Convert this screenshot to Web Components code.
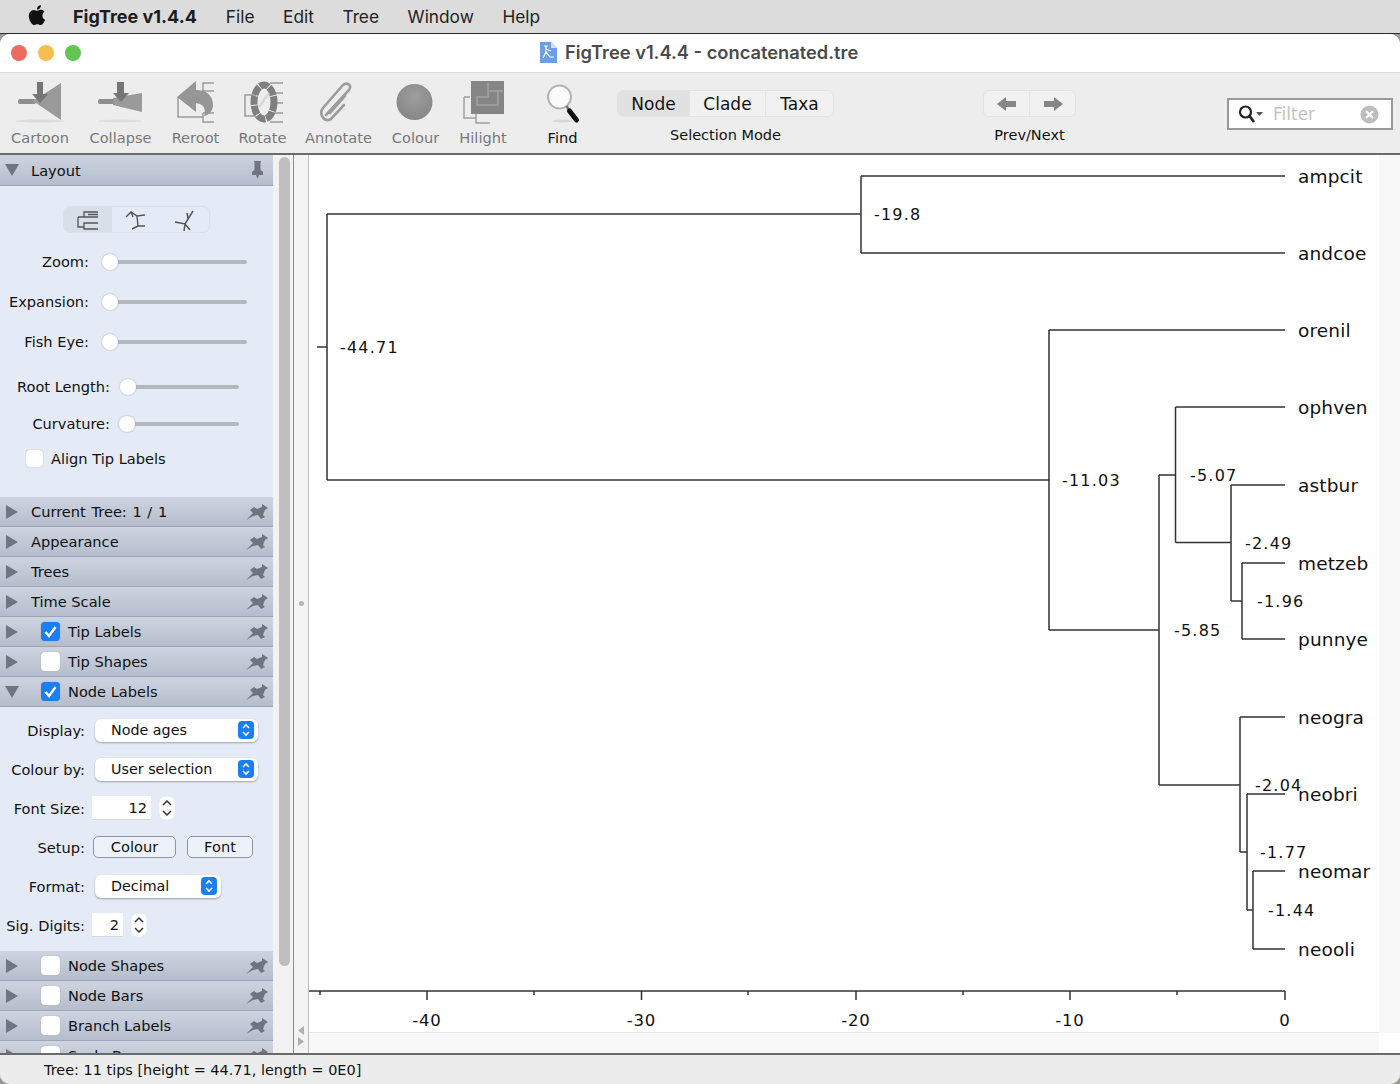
<!DOCTYPE html>
<html>
<head>
<meta charset="utf-8">
<title>FigTree</title>
<style>
  html, body { margin: 0; height: 100%; overflow: hidden; background: #9c9a94; }
  body { display: flex; flex-direction: column; font-family: "DejaVu Sans", sans-serif; color: #111; }
</style>
</head>
<body>
<fig-menubar></fig-menubar>
<fig-window>
  <fig-titlebar></fig-titlebar>
  <fig-toolbar></fig-toolbar>
  <fig-main>
    <fig-sidebar></fig-sidebar>
    <fig-tree></fig-tree>
  </fig-main>
  <fig-status>Tree: 11 tips [height = 44.71, length = 0E0]</fig-status>
</fig-window>
<script>
const css = String.raw
const html = String.raw

const PIN = html`<svg width="22" height="16" viewBox="0 0 22 16"><path fill="#6f747e" d="M0 16 L7 9 L4 6 L8 3 L11 5 L16 3 L16 0 L22 4 L19 6 L17 11 L19 13 L15 15 L12 11 L7 12 Z"/></svg>`
const PIN_DOWN = html`<svg width="22" height="18" viewBox="0 0 22 18"><path fill="#70757f" d="M8 0 H15 L14.5 2 V9 L17 11 V14 H13 L11.5 18 L10 14 H6 V11 L8.5 9 V2 Z"/></svg>`
const CHECK = html`<svg width="19" height="19" viewBox="0 0 19 19"><path d="M4.5 10 L8 14 L14.5 5" fill="none" stroke="#fff" stroke-width="2.4"/></svg>`
const UPDOWN = html`<svg width="16" height="18" viewBox="0 0 16 18"><path d="M5 7 L8 4 L11 7 M5 11 L8 14 L11 11" fill="none" stroke="#fff" stroke-width="1.6"/></svg>`

class FigMenubar extends HTMLElement {
  constructor() {
    super()
    this.attachShadow({ mode: "open" })
    this.shadowRoot.innerHTML = html`
      <style>
        :host { display: flex; align-items: center; flex: none; height: 33px; padding-bottom: 1px; box-sizing: content-box; height: 32px; background: #dcdcdc; border-bottom: 1px solid #2c2c2c; padding-left: 25px; font: 17.3px Inter, sans-serif; color: #222; }
        svg { width: 24px; height: 24px; margin-right: 24px; margin-top: -3px; }
        b { font-size: 18px; font-weight: 700; margin-right: 29px; color: #1c1c1c; }
        span { margin-right: 28.6px; }
      </style>
      <svg viewBox="0 0 24 24"><path fill="#111" d="M18.71 19.5c-.83 1.24-1.71 2.45-3.05 2.47-1.34.03-1.77-.79-3.29-.79-1.53 0-2 .77-3.27.82-1.31.05-2.3-1.32-3.14-2.53C4.25 17 2.94 12.45 4.7 9.39c.87-1.52 2.43-2.48 4.12-2.51 1.28-.02 2.5.87 3.29.87.78 0 2.26-1.07 3.81-.91.65.03 2.47.26 3.64 1.98-.09.06-2.17 1.28-2.15 3.81.03 3.02 2.65 4.03 2.68 4.04-.03.07-.42 1.44-1.38 2.83M13 3.5c.73-.83 1.94-1.46 2.94-1.5.13 1.17-.34 2.35-1.04 3.19-.69.85-1.83 1.51-2.95 1.42-.15-1.15.41-2.35 1.05-3.11z"/></svg>
      <b>FigTree v1.4.4</b><span>File</span><span>Edit</span><span>Tree</span><span>Window</span><span>Help</span>
    `
  }
}
customElements.define("fig-menubar", FigMenubar)

class FigWindow extends HTMLElement {
  constructor() {
    super()
    this.attachShadow({ mode: "open" })
    this.shadowRoot.innerHTML = html`
      <style>
        :host { display: flex; flex-direction: column; flex: 1; min-height: 0; border-radius: 10px; overflow: hidden; background: #ececec; }
      </style>
      <slot></slot>
    `
  }
}
customElements.define("fig-window", FigWindow)

class FigTitlebar extends HTMLElement {
  constructor() {
    super()
    this.attachShadow({ mode: "open" })
    this.shadowRoot.innerHTML = html`
      <style>
        :host { display: flex; align-items: center; flex: none; height: 38px; background: #fff; border-bottom: 1px solid #dcdcdc; padding-left: 11px; font: 600 18.3px Inter, sans-serif; color: #4b4b4b; }
        i { width: 16px; height: 16px; border-radius: 50%; margin-right: 11px; }
        .title { display: flex; align-items: center; margin-left: 448px; margin-top: -2px; }
        svg { margin-right: 8px; }
      </style>
      <i style="background:#ed6a5e"></i><i style="background:#f5bf4f"></i><i style="background:#61c554"></i>
      <div class="title">
        <svg width="17" height="21" viewBox="0 0 17 21"><path fill="#6b9ee6" d="M0 0 H11 L17 6 V21 H0 Z"/><path fill="#cfe0f8" d="M11 0 L17 6 H11 Z"/><path d="M4 4 H8 M6 4 V10 M6 7 L11 9 M6 10 L3 16 M6 10 L10 15 M10 15 H14" stroke="#fff" stroke-width="1.2" fill="none"/></svg>
        <span>FigTree v1.4.4 - concatenated.tre</span>
      </div>
    `
  }
}
customElements.define("fig-titlebar", FigTitlebar)

class FigTool extends HTMLElement {
  constructor() {
    super()
    this.attachShadow({ mode: "open" })
    this.shadowRoot.innerHTML = html`
      <style>
        :host { display: flex; flex-direction: column; align-items: center; width: var(--w); font-size: 14.6px; color: #787878; white-space: nowrap; }
        .icon { height: 46px; display: flex; justify-content: center; margin-bottom: 4px; }
        :host([active]) { color: #111; }
      </style>
      <div class="icon"><slot></slot></div>
      <span>${this.getAttribute("label")}</span>
    `
    this.style.setProperty("--w", this.getAttribute("width") + "px")
  }
}
customElements.define("fig-tool", FigTool)

class FigToolbar extends HTMLElement {
  constructor() {
    super()
    this.attachShadow({ mode: "open" })
    this.shadowRoot.innerHTML = html`
      <style>
        :host { display: flex; flex: none; height: 82px; box-sizing: border-box; padding: 6px 7px 0 10px; background: #ededed; border-bottom: 2px solid #6a6a6a; }
        .tools { display: flex; gap: 19px; }
        .find { margin-left: 21px; }
        .group { display: flex; flex-direction: column; align-items: center; font-size: 14.5px; color: #111; }
        .seg { display: flex; height: 27px; margin-top: 11px; margin-bottom: 10px; box-sizing: border-box; border: 1px solid #e2e2e2; border-radius: 6px; background: #f1f1f1; font-size: 17px; }
        .seg span { display: flex; align-items: center; justify-content: center; border-left: 1px solid #e4e4e4; }
        .seg span:first-child { border-left: 0; background: #e1e1e1; border-radius: 5px 0 0 5px; }
        .mode { margin-left: 37px; }
        .nav { margin-left: 151px; }
        .nav .seg span:first-child { background: none; }
        .search { display: flex; align-items: center; box-sizing: border-box; width: 166px; height: 32px; margin: 19px 0 0 152px; background: #fff; border: 2px solid #999; padding: 0 12px 0 9px; font-size: 17px; color: #c2c2c2; }
        .search span { flex: 1; margin-left: 8px; }
      </style>
      <div class="tools">
        <fig-tool label="Cartoon" width="60"><svg width="60" height="46" viewBox="10 78 60 46">
          <ellipse cx="40" cy="120" rx="25" ry="1.5" fill="#dcdcdc"/>
          <rect x="18" y="98" width="18" height="5" rx="2" fill="#8f8f8f"/><path d="M33 100 L61 82 V119 Z" fill="#9a9a9a"/>
          <path d="M37 81 H43 V93 H48 L40 102 L32 93 H37 Z" fill="#757575"/></svg></fig-tool>
        <fig-tool label="Collapse" width="63"><svg width="63" height="46" viewBox="89 78 63 46">
          <ellipse cx="120" cy="120" rx="22" ry="1.5" fill="#dcdcdc"/>
          <rect x="98" y="98" width="18" height="5" rx="2" fill="#8f8f8f"/><path d="M113 97 L142 92 V111 L113 104 Z" fill="#9a9a9a"/>
          <path d="M117 81 H124 V92 H129 L121 101 L113 92 H117 Z" fill="#757575"/></svg></fig-tool>
        <fig-tool label="Reroot" width="49"><svg width="49" height="46" viewBox="171 78 49 46">
          <path d="M203 90 V82 H214 M203 90 H214 M178 96 V116 H203 M203 112 V121 H214 M203 112 H214" fill="none" stroke="#9a9a9a" stroke-width="1.5"/>
          <path d="M177 96 L196 80 V89 C207 89 213 95 213 104 C213 110 209 114 204 115 C206 110 205 103 196 102 V111 Z" fill="#969696"/></svg></fig-tool>
        <fig-tool label="Rotate" width="47"><svg width="47" height="46" viewBox="239 78 47 46">
          <path d="M256 94 H245 V115 H256 M270 82 H283 M272 92 H283 M272 102 H283 M270 121 H283 M272 112 H283" fill="none" stroke="#9a9a9a" stroke-width="1.5"/>
          <ellipse cx="264" cy="101" rx="10" ry="17" fill="none" stroke="#7f7f7f" stroke-width="7" stroke-dasharray="9 1"/>
          <path d="M259 106 L269 92" stroke="#d8d8d8" stroke-width="2.5"/></svg></fig-tool>
        <fig-tool label="Annotate" width="67"><svg width="67" height="46" viewBox="305 78 67 46">
          <path d="M326 114 L349 89 C353 84 346 80 342 85 L323 107 C319 112 323 122 331 118 L344 104 M345 95 L330 112" fill="none" stroke="#9c9c9c" stroke-width="2.6" stroke-linecap="round"/></svg></fig-tool>
        <fig-tool label="Colour" width="49"><svg width="49" height="46" viewBox="392 78 49 46">
          <defs><radialGradient id="ball" cx="50%" cy="35%" r="65%"><stop offset="0" stop-color="#9e9e9e"/><stop offset="1" stop-color="#868686"/></radialGradient></defs>
          <circle cx="415.5" cy="101" r="18" fill="url(#ball)"/></svg></fig-tool>
        <fig-tool label="Hilight" width="48"><svg width="48" height="46" viewBox="461 78 48 46">
          <path d="M466 96 V117 H478 M472 96 H466 M478 112 V122 H492 M478 112 H492" fill="none" stroke="#a0a0a0" stroke-width="1.5"/>
          <rect x="473" y="80" width="33" height="33" fill="#858585"/><path d="M479 96 V104 H500 V90 H490 V96 Z M490 82 V90 H505" fill="none" stroke="#a3a3a3" stroke-width="1.5"/></svg></fig-tool>
        <fig-tool class="find" label="Find" active width="31"><svg width="36" height="46" viewBox="546.5 78 36 46">
          <ellipse cx="564" cy="120" rx="10" ry="1.5" fill="#d6d6d6"/>
          <circle cx="561" cy="96" r="11.5" fill="#fbfbfb" stroke="#b4b4b4" stroke-width="2"/>
          <path d="M568 105 L571 110" stroke="#777" stroke-width="2.5"/><path d="M571 110 L578 119" stroke="#111" stroke-width="5" stroke-linecap="round"/></svg></fig-tool>
      </div>
      <div class="group mode" style="margin-left:39px">
        <div class="seg"><span style="width:71px">Node</span><span style="width:75px">Clade</span><span style="width:67px">Taxa</span></div>
        <span>Selection Mode</span>
      </div>
      <div class="group nav" style="margin-left:149px">
        <div class="seg"><span style="width:45px"><svg width="20" height="16" viewBox="0 0 20 16"><path d="M0 8 L9 1 V5 H19 V11 H9 V15 Z" fill="#858585"/></svg></span><span style="width:45px"><svg width="20" height="16" viewBox="0 0 20 16"><path d="M20 8 L11 1 V5 H1 V11 H11 V15 Z" fill="#858585"/></svg></span></div>
        <span>Prev/Next</span>
      </div>
      <div class="search" style="margin-left:151px">
        <svg width="27" height="20" viewBox="0 0 27 20"><circle cx="7.5" cy="8" r="5.5" fill="none" stroke="#222" stroke-width="2.2"/><path d="M11.5 12 L16 18" stroke="#222" stroke-width="2.6"/><path d="M18 8 H25 L21.5 12 Z" fill="#555"/></svg>
        <span>Filter</span>
        <svg width="19" height="19" viewBox="0 0 19 19"><circle cx="9.5" cy="9.5" r="9" fill="#bdbdbd"/><path d="M6 6 L13 13 M13 6 L6 13" stroke="#fff" stroke-width="2.2"/></svg>
      </div>
    `
  }
}
customElements.define("fig-toolbar", FigToolbar)

class FigMain extends HTMLElement {
  constructor() {
    super()
    this.attachShadow({ mode: "open" })
    this.shadowRoot.innerHTML = html`
      <style>
        :host { display: flex; flex: 1; min-height: 0; background: #fff; }
      </style>
      <slot></slot>
    `
  }
}
customElements.define("fig-main", FigMain)

class FigSection extends HTMLElement {
  constructor() {
    super()
    this.attachShadow({ mode: "open" })
    const open = this.hasAttribute("open")
    const check = this.getAttribute("check")
    const pin = this.hasAttribute("pinned") ? PIN_DOWN : PIN
    this.shadowRoot.innerHTML = html`
      <style>
        :host { display: block; font-size: 14.6px; }
        .head { display: flex; align-items: center; height: var(--h, 30px); box-sizing: border-box; background: linear-gradient(#ced4e0, #b5bdcc); border-bottom: 1px solid #9da6b8; }
        .arrow { width: 0; height: 0; margin-left: 6px; border-style: solid; }
        .closed { border-width: 7px 0 7px 12px; border-color: transparent transparent transparent #6f7583; }
        .opened { margin-left: 5px; margin-right: -1px; border-width: 12px 7px 0 7px; border-color: #6f7583 transparent transparent transparent; }
        .name { flex: 1; margin-left: 13px; white-space: nowrap; }
        .box { width: 19px; height: 19px; margin-left: 23px; margin-right: -5px; border-radius: 4px; background: #fff; box-shadow: 0 0 1px #8b8b8b; }
        .box.on { background: #1a7ff5; }
        .pin { display: flex; margin-right: 5px; }
      </style>
      <div class="head">
        <i class="arrow ${open ? "opened" : "closed"}"></i>
        ${check === null ? "" : `<i class="box ${check === "on" ? "on" : ""}">${check === "on" ? CHECK : ""}</i>`}
        <span class="name">${this.getAttribute("name")}</span>
        <span class="pin">${pin}</span>
      </div>
      <slot></slot>
    `
  }
}
customElements.define("fig-section", FigSection)

class FigSlider extends HTMLElement {
  constructor() {
    super()
    this.attachShadow({ mode: "open" })
    const label = this.getAttribute("label")
    const labelWidth = this.getAttribute("label-width")
    const thumb = this.getAttribute("thumb")
    const end = this.getAttribute("end")
    this.shadowRoot.innerHTML = html`
      <style>
        :host { display: flex; align-items: center; height: 24px; }
        label { width: ${labelWidth}px; margin-top: -2px; text-align: right; white-space: nowrap; flex: none; }
        .track { position: relative; height: 4px; border-radius: 2px; background: #b3b8bf; margin-left: ${thumb - labelWidth}px; width: ${end - thumb}px; }
        .thumb { position: absolute; left: -8px; top: -6px; width: 16px; height: 16px; border-radius: 50%; background: #fff; box-shadow: 0 0 2px #a5a9b2; }
      </style>
      <label>${label}:</label>
      <div class="track"><div class="thumb"></div></div>
    `
  }
}
customElements.define("fig-slider", FigSlider)

class FigRow extends HTMLElement {
  constructor() {
    super()
    this.attachShadow({ mode: "open" })
    this.shadowRoot.innerHTML = html`
      <style>
        :host { display: flex; align-items: center; height: 24px; }
        label { width: 85px; flex: none; text-align: right; white-space: nowrap; margin-right: var(--gap, 7px); }
      </style>
      <label>${this.getAttribute("label")}:</label>
      <slot></slot>
    `
  }
}
customElements.define("fig-row", FigRow)

class FigSelect extends HTMLElement {
  constructor() {
    super()
    this.attachShadow({ mode: "open" })
    this.shadowRoot.innerHTML = html`
      <style>
        :host { display: flex; align-items: center; justify-content: space-between; box-sizing: border-box; margin-left: 3px; height: 23px; padding: 0 4px 0 16px; background: #fff; border-radius: 6px; box-shadow: 0 1px 2px #9aa0aa; width: ${this.getAttribute("width")}px; font-size: 14.3px; }
        i { display: flex; width: 16px; height: 18px; border-radius: 4px; background: #1a7ff5; }
      </style>
      <span><slot></slot></span><i>${UPDOWN}</i>
    `
  }
}
customElements.define("fig-select", FigSelect)

class FigStepper extends HTMLElement {
  constructor() {
    super()
    this.attachShadow({ mode: "open" })
    this.shadowRoot.innerHTML = html`
      <style>
        :host { display: flex; align-items: center; }
        .field { box-sizing: border-box; width: ${this.getAttribute("width")}px; height: 24px; line-height: 23px; padding-right: 4px; background: #fff; border-bottom: 1px solid #d5d9e0; text-align: right; }
        svg { margin-left: 8px; }
      </style>
      <div class="field"><slot></slot></div>
      <svg width="16" height="24" viewBox="0 0 16 24"><rect x="0.5" y="0.5" width="15" height="23" rx="6" fill="#fff"/><path d="M4 9 L8 5 L12 9 M4 15 L8 19 L12 15" fill="none" stroke="#333" stroke-width="1.5"/></svg>
    `
  }
}
customElements.define("fig-stepper", FigStepper)

class FigSidebar extends HTMLElement {
  constructor() {
    super()
    this.attachShadow({ mode: "open" })
    this.shadowRoot.innerHTML = html`
      <style>
        :host { display: flex; flex: none; width: 309px; overflow: hidden; }
        .panel { width: 273px; flex: none; background: #e4ebf6; border-right: 1px solid #f2f2f2; box-sizing: content-box; font-size: 14.6px; overflow: hidden; }
        .scroll { flex: none; width: 20px; padding: 2px 0 0 5px; box-sizing: border-box; background: #f2f2f2; border-right: 1px solid #8b8b8b; }
        .thumb { width: 11px; height: 809px; border-radius: 6px; background: #bfbfbf; }
        .split { flex: 1; display: flex; flex-direction: column; align-items: center; background: #f3f3f3; border-right: 1px solid #bcbcbc; position: relative; }
        .dot { width: 5px; height: 5px; margin-top: 446px; border-radius: 50%; background: #b5b5b5; }
        .nub { margin-top: auto; margin-bottom: 6px; }
        .layout { box-sizing: border-box; height: 311px; padding-top: 20px; }
        .seg { display: flex; width: 147px; height: 27px; margin-left: 63px; box-sizing: border-box; border: 1px solid #dbe1ec; border-radius: 7px; }
        .seg span { display: flex; align-items: center; justify-content: center; width: 49px; }
        .seg span:first-child { background: #d9dfe9; border-radius: 6px 0 0 6px; }
        fig-slider { margin-bottom: 16px; }
        .first { margin-top: 17px; }
        .check { display: flex; align-items: center; height: 24px; margin: -3px 0 0 26px; gap: 8px; }
        .check i { width: 17px; height: 17px; border-radius: 4px; background: #fff; box-shadow: 0 0 1px #8b8b8b; }
        .labels { box-sizing: border-box; height: 244px; padding-top: 11px; display: flex; flex-direction: column; gap: 15px; }
        .btn { box-sizing: border-box; height: 22px; line-height: 19px; text-align: center; border: 1px solid #8f95a3; border-radius: 5px; background: #edf1f8; }
      </style>
      <div class="panel">
        <fig-section name="Layout" open pinned style="--h:31px"></fig-section>
        <div class="layout">
          <div class="seg">
            <span><svg width="26" height="22" viewBox="0 0 26 22"><path d="M3 8 V18 H9 M3 8 H9 M9 8 V3 H23 M9 8 H23 M9 18 V14 H23 M9 18 V20 H23 M13 5.5 H23" fill="none" stroke="#555" stroke-width="1.3"/></svg></span>
            <span><svg width="26" height="24" viewBox="0 0 26 24"><path d="M3 9 L8 4 L14 8 L22 7 M14 8 L15 18 L22 18 M15 18 L9 21 M8 4 L10 9" fill="none" stroke="#555" stroke-width="1.4"/></svg></span>
            <span><svg width="26" height="24" viewBox="0 0 26 24"><path d="M3 14 L13 16 L21 3 M16 11 L15 5 M13 16 L12 23 M13 16 L18 22" fill="none" stroke="#555" stroke-width="1.5"/></svg></span>
          </div>
          <fig-slider class="first" label="Zoom" label-width="89" thumb="110" end="247"></fig-slider>
          <fig-slider label="Expansion" label-width="89" thumb="110" end="247"></fig-slider>
          <fig-slider label="Fish Eye" label-width="89" thumb="110" end="247" style="margin-bottom:21px"></fig-slider>
          <fig-slider label="Root Length" label-width="110" thumb="128" end="239" style="margin-bottom:13px"></fig-slider>
          <fig-slider label="Curvature" label-width="110" thumb="127" end="239" style="margin-bottom:13px"></fig-slider>
          <div class="check"><i></i><span>Align Tip Labels</span></div>
        </div>
        <fig-section name="Current Tree: 1 / 1" style="word-spacing:1px"></fig-section>
        <fig-section name="Appearance"></fig-section>
        <fig-section name="Trees"></fig-section>
        <fig-section name="Time Scale"></fig-section>
        <fig-section name="Tip Labels" check="on"></fig-section>
        <fig-section name="Tip Shapes" check="off"></fig-section>
        <fig-section name="Node Labels" check="on" open></fig-section>
        <div class="labels">
          <fig-row label="Display"><fig-select width="163">Node ages</fig-select></fig-row>
          <fig-row label="Colour by"><fig-select width="163">User selection</fig-select></fig-row>
          <fig-row label="Font Size"><fig-stepper width="59">12</fig-stepper></fig-row>
          <fig-row label="Setup"><div class="btn" style="width:83px;margin-left:1px">Colour</div><div class="btn" style="width:66px;margin-left:11px">Font</div></fig-row>
          <fig-row label="Format"><fig-select width="126">Decimal</fig-select></fig-row>
          <fig-row label="Sig. Digits"><fig-stepper width="31">2</fig-stepper></fig-row>
        </div>
        <fig-section name="Node Shapes" check="off"></fig-section>
        <fig-section name="Node Bars" check="off"></fig-section>
        <fig-section name="Branch Labels" check="off"></fig-section>
        <fig-section name="Scale Bar" check="off"></fig-section>
      </div>
      <div class="scroll"><div class="thumb"></div></div>
      <div class="split">
        <div class="dot"></div>
        <svg class="nub" width="8" height="22" viewBox="0 0 8 22"><path d="M7 1 L1 5.5 L7 10 Z M1 12 L7 16.5 L1 21 Z" fill="#b0b0b0"/></svg>
      </div>
    `
  }
}
customElements.define("fig-sidebar", FigSidebar)

// page coordinates of the drawing, read off the reference
const BRANCHES = [
  "M317 347H327", "M327 214V480", "M327 214H861", "M327 480H1049",
  "M861 176V253", "M861 176H1285", "M861 253H1285",
  "M1049 330V630", "M1049 330H1285", "M1049 630H1159",
  "M1159 475V785", "M1159 475H1175.5", "M1175.5 407V542.5", "M1175.5 407H1285", "M1175.5 542.5H1231",
  "M1231 485V601", "M1231 485H1285", "M1231 601H1242", "M1242 563V639", "M1242 563H1285", "M1242 639H1285",
  "M1159 785H1240", "M1240 717V852", "M1240 717H1285", "M1240 852H1247", "M1247 794V910", "M1247 794H1285",
  "M1247 910H1253", "M1253 871V949", "M1253 871H1285", "M1253 949H1285",
]
const TIPS = [
  ["ampcit", 176], ["andcoe", 253], ["orenil", 330], ["ophven", 407], ["astbur", 485], ["metzeb", 563],
  ["punnye", 639], ["neogra", 717], ["neobri", 794], ["neomar", 871], ["neooli", 949],
]
const NODES = [
  ["-44.71", 340, 347], ["-19.8", 874, 214], ["-11.03", 1062, 480], ["-5.07", 1190, 475], ["-2.49", 1245, 543],
  ["-1.96", 1257, 601], ["-5.85", 1174, 630], ["-2.04", 1255, 785], ["-1.77", 1260, 852], ["-1.44", 1268, 910],
]
const MAJOR = [[427, "-40"], [641.5, "-30"], [856, "-20"], [1070, "-10"], [1285, "0"]]
const MINOR = [320, 534, 748, 963, 1177]

class FigTree extends HTMLElement {
  constructor() {
    super()
    this.attachShadow({ mode: "open" })
    this.shadowRoot.innerHTML = html`
      <style>
        :host { display: grid; flex: 1; min-width: 0; grid-template: 878px 1fr / 1070px 1fr; background: #f8f8f8; }
        svg { display: block; background: #fff; border-bottom: 1px solid #e6e6e6; box-sizing: content-box; }
        .corner { grid-area: 2 / 2; background: #fff; }
        text { font-family: "DejaVu Sans", sans-serif; fill: #111; }
        .tip { font-size: 18.5px; letter-spacing: .15px; }
        .node { font-size: 16px; letter-spacing: 1.2px; }
        .axis { font-size: 16.5px; letter-spacing: .8px; text-anchor: middle; }
        path { fill: none; stroke: #333; stroke-width: 1.5; }
      </style>
      <svg width="1070" height="877" viewBox="309 155 1070 877">
        <path d="${BRANCHES.join(" ")}"/>
        <path d="M309 991H1285 ${MAJOR.map(t => `M${t[0]} 991V1000`).join(" ")} ${MINOR.map(x => `M${x} 991V995`).join(" ")}"/>
        ${TIPS.map(t => `<text class="tip" x="1298" y="${t[1] + 6.5}">${t[0]}</text>`).join("")}
        ${NODES.map(n => `<text class="node" x="${n[1]}" y="${n[2] + 6}">${n[0]}</text>`).join("")}
        ${MAJOR.map(t => `<text class="axis" x="${t[0]}" y="1026">${t[1]}</text>`).join("")}
      </svg>
      <div class="corner"></div>
    `
  }
}
customElements.define("fig-tree", FigTree)

class FigStatus extends HTMLElement {
  constructor() {
    super()
    this.attachShadow({ mode: "open" })
    this.shadowRoot.innerHTML = html`
      <style>
        :host { display: flex; align-items: center; flex: none; height: 31px; box-sizing: border-box; padding: 1px 0 0 44px; background: #ececec; border-top: 2px solid #6a6a6a; font-size: 14.45px; }
      </style>
      <slot></slot>
    `
  }
}
customElements.define("fig-status", FigStatus)
</script>
</body>
</html>
